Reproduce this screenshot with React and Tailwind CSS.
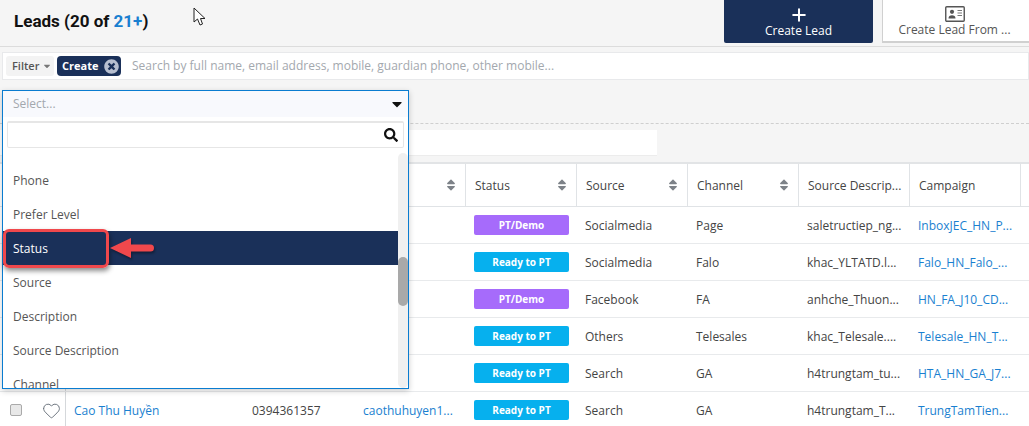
import { Plus, Heart } from 'lucide-react';
import { FaCaretDown, FaSearch, FaSort, FaTimesCircle } from 'react-icons/fa';

const rows = [
  { status: 'PT/Demo', source: 'Socialmedia', channel: 'Page', desc: 'saletructiep_ng...', campaign: 'InboxJEC_HN_P...' },
  { status: 'Ready to PT', source: 'Socialmedia', channel: 'Falo', desc: 'khac_YLTATD.l...', campaign: 'Falo_HN_Falo_...' },
  { status: 'PT/Demo', source: 'Facebook', channel: 'FA', desc: 'anhche_Thuon...', campaign: 'HN_FA_J10_CD...' },
  { status: 'Ready to PT', source: 'Others', channel: 'Telesales', desc: 'khac_Telesale....', campaign: 'Telesale_HN_T...' },
  { status: 'Ready to PT', source: 'Search', channel: 'GA', desc: 'h4trungtam_tu...', campaign: 'HTA_HN_GA_J7...' },
  { status: 'Ready to PT', source: 'Search', channel: 'GA', desc: 'h4trungtam_T...', campaign: 'TrungTamTien...', name: 'Cao Thu Huyền', phone: '0394361357', email: 'caothuhuyen1...' },
];

const options = ['Phone', 'Prefer Level', 'Status', 'Source', 'Description', 'Source Description', 'Channel'];

const gridCols = 'grid grid-cols-[66px_178px_111px_111px_111px_111px_111px_111px_111px_108px]';

const HeaderCell = ({ label, sort }) => (
  <div className="flex items-center justify-between pl-[9px] pr-[7px] border-r border-[#e0e3e6] text-[#444]">
    <span className="pt-[2px] whitespace-nowrap">{label}</span>
    {sort && <FaSort size={14} className="text-[#7d8288]" />}
  </div>
);

const Badge = ({ status }) => (
  <div className={`w-[95px] h-5 ml-2 rounded-[2px] flex items-center justify-center text-white text-[10px] font-bold ${status === 'PT/Demo' ? 'bg-[#a66bfb]' : 'bg-[#06b0ee]'}`}>
    {status}
  </div>
);

const Row = ({ row }) => (
  <div className={`${gridCols} h-[37px] items-center border-b border-[#e8eaec] bg-white text-[#444]`}>
    <div className="h-full flex items-center pl-[10px] gap-[20px] border-r border-[#d5d8db]">
      <span className="w-[12px] h-[12px] rounded-[2px] border border-[#aaa] bg-[#e8e8e8]" />
      <Heart size={19} strokeWidth={1.1} className="text-[#5c6670]" />
    </div>
    <div className="pl-2 pt-[1px] text-[#1a7fd0]">{row.name}</div>
    <div className="pl-2 pt-[1px]">{row.phone}</div>
    <div className="pl-2 pt-[1px] text-[#1a7fd0]">{row.email}</div>
    <Badge status={row.status} />
    <div className="pl-2 pt-[1px]">{row.source}</div>
    <div className="pl-2 pt-[1px]">{row.channel}</div>
    <div className="pl-2 pt-[1px]">{row.desc}</div>
    <div className="pl-2 pt-[1px] text-[#1a7fd0]">{row.campaign}</div>
    <div />
  </div>
);

export default function App() {
  return (
    <div className="relative w-[1029px] h-[426px] overflow-hidden bg-[#f5f5f5] text-[12px] font-['Open_Sans',sans-serif]">
      {/* header */}
      <div className="h-[47px] flex items-start justify-between border-b border-[#dcdcdc]">
        <h1 className="mt-[12px] ml-[14px] text-[17px] leading-[18px] font-bold text-[#111] font-['Roboto',sans-serif]">
          Leads (20 of <span className="text-[#1a7fd0]">21+</span>)
        </h1>
        <div className="flex items-start">
          <div className="w-[149px] h-[43px] rounded-b-[2px] bg-[#1a3059] text-white flex flex-col items-center pt-[5px]">
            <Plus size={20} strokeWidth={2.4} />
            <span className="leading-[14px] mt-[-1px]">Create Lead</span>
          </div>
          <div className="w-[147px] h-[43px] ml-[9px] pr-[3px] bg-white border-l border-b-2 border-[#d0d0d0] text-[#555] flex flex-col items-center pt-[6px]">
            <svg width="20" height="16" viewBox="0 0 20 16" fill="none">
              <rect x="0.75" y="0.75" width="18.5" height="14.5" rx="1" stroke="#555" strokeWidth="1.4" />
              <circle cx="7" cy="5.8" r="2.1" fill="#555" />
              <path d="M3.5 12.5c0-2.2 1.4-3.3 3.5-3.3s3.5 1.1 3.5 3.3z" fill="#555" />
              <path d="M12.5 4.5h4.5M12.5 7h4.5M12.5 9.5h4.5" stroke="#777" strokeWidth="1" />
            </svg>
            <span className="leading-[14px] mt-[1px]">Create Lead From ...</span>
          </div>
        </div>
      </div>

      {/* filter bar */}
      <div className="mt-[5px] ml-[2px] h-[28px] bg-white border border-[#e8e9eb] flex items-center pl-[3px] gap-[3px]">
        <div className="h-[20px] w-[48px] rounded-[3px] bg-[#f3f3f3] flex items-center pl-[6px] gap-[3px] text-[11px] font-semibold text-[#555]">
          Filter <FaCaretDown size={10} className="text-[#777]" />
        </div>
        <div className="h-[20px] w-[64px] rounded-[4px] bg-[#1a3059] flex items-center justify-between pl-[5px] pr-[2px] text-[11px] font-bold text-white">
          Create <FaTimesCircle size={15} className="text-[#b7bfd0]" />
        </div>
        <span className="ml-[8px] text-[#a3a8ae]">Search by full name, email address, mobile, guardian phone, other mobile...</span>
      </div>

      {/* filter area */}
      <div className="h-[82px] pt-[43px]">
        <div className="border-t border-dashed border-[#cfcfcf]" />
        <div className="mt-[6px] w-[657px] h-[26px] bg-white border-b border-[#ececec]" />
      </div>

      {/* table */}
      <div className="border-t-2 border-[#e2e4e6] bg-white">
        <div className={`${gridCols} h-[43px] border-b border-[#e0e3e6]`}>
          <div className="border-r border-[#e0e3e6]" />
          <HeaderCell label="" sort />
          <HeaderCell label="" sort />
          <HeaderCell label="" sort />
          <HeaderCell label="Status" sort />
          <HeaderCell label="Source" sort />
          <HeaderCell label="Channel" sort />
          <HeaderCell label="Source Descrip..." />
          <HeaderCell label="Campaign" />
          <div />
        </div>
        {rows.map((row, i) => (
          <Row key={i} row={row} />
        ))}
      </div>

      {/* dropdown */}
      <div className="absolute left-[2px] top-[90px] w-[407px] h-[299px] overflow-hidden bg-white border border-[#0a7cd0] shadow-[0_2px_6px_rgba(0,0,0,0.2)]">
        <div className="h-[26px] bg-[#f8f9fd] flex items-center justify-between pl-[10px] pr-[3px] text-[#a3a8ae]">
          Select...
          <FaCaretDown size={16} className="text-[#111]" />
        </div>
        <div className="mt-[4px] mx-[4px] h-[27px] border border-[#e6e6e6] border-t-2 rounded-[2px] flex items-center justify-end pr-[5px]">
          <FaSearch size={14} className="text-[#111]" />
        </div>
        <div className="mt-[15px] mr-[10px]">
          {options.map((o) => (
            <div
              key={o}
              className={`h-[34px] pl-[10px] pt-[1px] flex items-center ${o === 'Status' ? 'bg-[#1a3059] text-white' : 'text-[#555]'}`}
            >
              {o}
            </div>
          ))}
        </div>
        <div className="absolute right-0 top-[62px] bottom-0 w-[10px] rounded-[5px] bg-[#f0f0f0]">
          <div className="mt-[104px] h-[49px] rounded-[5px] bg-[#a9a9a9]" />
        </div>
      </div>

      {/* red annotation */}
      <div className="absolute left-[3px] top-[229px] w-[106px] h-[39px] rounded-[6px] border-[3px] border-[#f0484c] shadow-[1px_3px_5px_rgba(0,0,0,0.45)]" />
      <svg className="absolute left-[108px] top-[236px] drop-shadow-[1px_2px_1px_rgba(0,0,0,0.35)]" width="48" height="26" viewBox="0 0 48 26" fill="none">
        <path d="M2 12 L23 2 V8.5 H42.5 a3.5 3.5 0 0 1 0 7 H23 V22 Z" fill="#f0484c" />
      </svg>

      {/* mouse cursor */}
      <svg className="absolute left-[193px] top-[7px]" width="14" height="20" viewBox="0 0 14 20" fill="#fff" stroke="#222" strokeWidth="1">
        <path d="M1 1 V15 L4.5 12 L7 18 L9.5 17 L7.5 11.5 H12 Z" />
      </svg>
    </div>
  );
}
